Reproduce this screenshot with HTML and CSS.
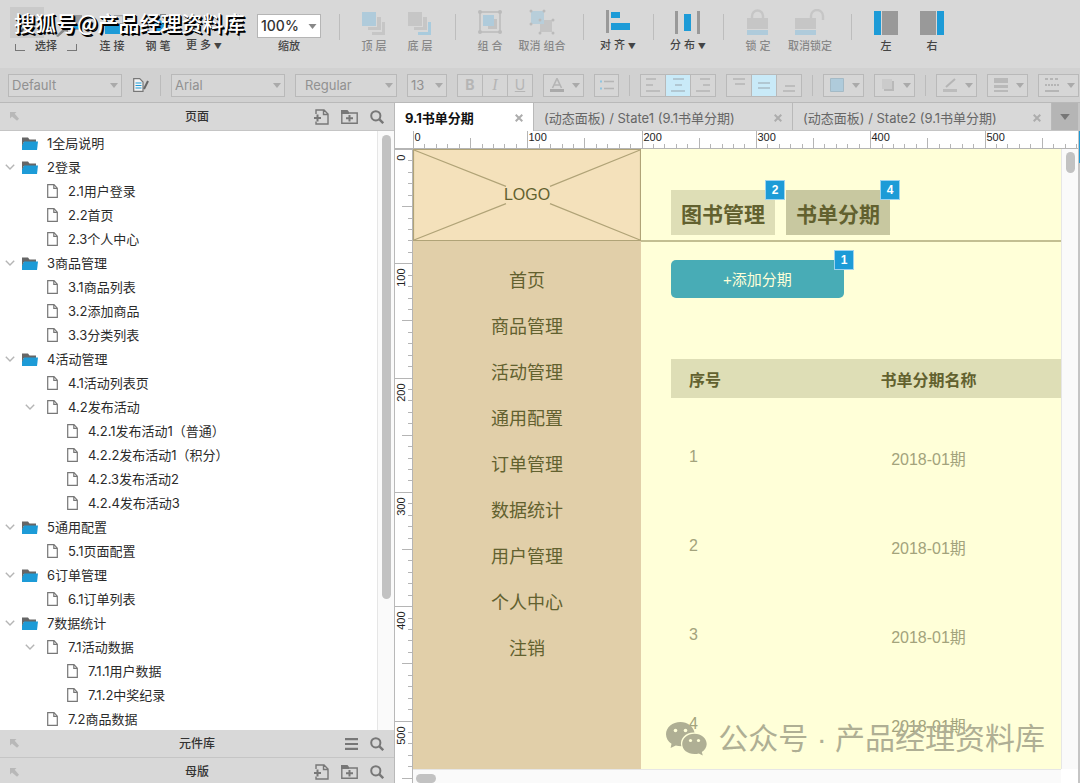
FILE: index.html
```html
<!DOCTYPE html>
<html lang="zh-CN">
<head>
<meta charset="utf-8">
<title>9.1书单分期</title>
<link rel="stylesheet" href="styles.css">
</head>
<body>
<svg class="defs" aria-hidden="true">
  <symbol id="i-folder" viewBox="0 0 16 13"><path d="M0 .5h6l1.500 2H14V5H0z" fill="#666"/><path d="M2 4.500h14L15 13H0V8z" fill="#1d9bd7"/><path d="M0 3h2.500L0 9z" fill="#666"/></symbol>
  <symbol id="i-page" viewBox="0 0 11 14"><path d="M.7.7h6.300l3.300 3.500v9.100H.7zM6.800.7v3.700h3.500" fill="none" stroke="#777" stroke-width="1.200"/></symbol>
  <symbol id="i-chev" viewBox="0 0 10 6"><path d="M.8.8 5 5 9.200.8" fill="none" stroke="#b5b5b5" stroke-width="1.400"/></symbol>
  <symbol id="i-undock" viewBox="0 0 9 9"><path d="M0 0h6.500L4.700 1.800 9 6.800 7 8.800 2 4.400 0 6.500z" fill="#b8b8b8"/></symbol>
  <symbol id="i-addpage" viewBox="0 0 15 16"><path d="M2 5V1h8l4 4v10H2v-2.500M9.500 1v4.500H14" fill="none" stroke="#777" stroke-width="1.400"/><path d="M0 9h7M3.500 5.500v7" stroke="#777" stroke-width="2"/></symbol>
  <symbol id="i-addfolder" viewBox="0 0 17 14"><path d="M.8 13.200V3h15.400v10.200z" fill="none" stroke="#777" stroke-width="1.400"/><path d="M0 0h6.500L8 2v2H0z" fill="#777"/><path d="M5 8.300h7M8.500 5v6.600" stroke="#777" stroke-width="2"/></symbol>
  <symbol id="i-search" viewBox="0 0 14 14"><circle cx="5.800" cy="5.800" r="4.600" fill="none" stroke="#777" stroke-width="2"/><path d="m9.200 9.200 4 4" stroke="#777" stroke-width="2.400"/></symbol>
  <symbol id="i-menu" viewBox="0 0 13 12"><path d="M0 1.200h13M0 6h13M0 10.800h13" stroke="#777" stroke-width="2.200"/></symbol>
  <symbol id="i-x" viewBox="0 0 8 8"><path d="m.7.7 6.600 6.600M7.300.7.7 7.300" stroke="#adadad" stroke-width="2"/></symbol>
  <symbol id="i-down" viewBox="0 0 8 5"><path d="M0 0h8L4 5z" fill="currentColor"/></symbol>
</svg>

<header class="toolbar">
  <button class="tool wide select-tool"><span class="select-icons"><svg width="34" height="31"><path d="M9 27 25 9" stroke="#555" stroke-width="2"/></svg><svg width="32" height="31"><path d="M12 8h18v15H12z" fill="#999"/><path d="M16 18h13v4H16z" fill="#1d9bd7"/><path d="m4 29 8-8-5-1h9v8l-3-4-7 6z" fill="#888"/></svg></span><span class="brackets">选择</span></button>
  <button class="tool"><svg width="24" height="24"><path d="M14 4.700h9v8h-9z" fill="none" stroke="#999"/><path d="M5 13h15v10H5z" fill="#1d9bd7"/></svg><span>连 接</span></button>
  <button class="tool"><svg width="24" height="24"><path d="m7 20 4-13 9 6-6 7z" fill="#1d9bd7"/><path d="M14 4h5v5" fill="none" stroke="#888" stroke-width="2"/></svg><span>钢 笔</span></button>
  <button class="tool"><svg width="24" height="24"></svg><span>更 多 <small>▼</small></span></button>
  <i class="sep"></i>
  <label class="zoom"><span class="pick"><select><option>100%</option></select><svg width="9" height="5"><use href="#i-down"/></svg></span><span>缩放</span></label>
  <i class="sep"></i>
  <button class="tool" disabled><svg width="24" height="24"><path d="M15 6h4v13H6v-3h9z" fill="#c6c6c6"/><path d="M20 11h3v13H10v-3h10z" fill="#c6c6c6"/><path d="M0 1h14v14H0z" fill="#afcbdb"/></svg><span>顶 层</span></button>
  <button class="tool" disabled><svg width="24" height="24"><path d="M15 6h4v13H6v-3h9z" fill="#c6c6c6"/><path d="M20 11h3v13H10v-3h10z" fill="#a9cbdd"/><path d="M0 1h14v14H0z" fill="#c6c6c6"/></svg><span>底 层</span></button>
  <i class="sep"></i>
  <button class="tool" disabled><svg width="26" height="26"><path d="M3 3h20v20H3z" fill="none" stroke="#bbb" stroke-width="1.500"/><g fill="#bbb"><circle cx="3" cy="3" r="2"/><circle cx="23" cy="3" r="2"/><circle cx="3" cy="23" r="2"/><circle cx="23" cy="23" r="2"/><path d="M15 10h5v10h-9v-4h4z" fill="#c3c3c3"/></g><path d="M6 6h11v11H6z" fill="#afcbdb"/></svg><span>组 合</span></button>
  <button class="tool mid" disabled><svg width="26" height="26"><path d="M11 11h12v12H11z" fill="#c5c5c5"/><path d="M2 2h13v13H2z" fill="#b8ceda"/><g fill="#bbb"><circle cx="2" cy="2" r="1.500"/><circle cx="15" cy="2" r="1.500"/><circle cx="2" cy="15" r="1.500"/><circle cx="24" cy="11" r="1.500"/><circle cx="11" cy="24" r="1.500"/><circle cx="24" cy="24" r="1.500"/><circle cx="11" cy="11" r="1.500"/></g></svg><span>取消 组合</span></button>
  <i class="sep"></i>
  <button class="tool"><svg width="24" height="24"><path d="M0 0h3v23H0z" fill="#999"/><path d="M5 2h9v6H5zM5 13h19v7H5z" fill="#1d9bd7"/></svg><span>对 齐 <small>▼</small></span></button>
  <i class="sep"></i>
  <button class="tool"><svg width="26" height="24"><path d="M0 1h3v23H0zM22 1h3v23h-3z" fill="#999"/><path d="M9 4h7v17H9z" fill="#1d9bd7"/></svg><span>分 布 <small>▼</small></span></button>
  <i class="sep"></i>
  <button class="tool" disabled><svg width="22" height="26"><path d="M5 10V7a5.500 5.500 0 0 1 11 0v3" fill="none" stroke="#c6c6c6" stroke-width="2.400"/><path d="M0 9h21v11H0z" fill="#c6c6c6"/><path d="M0 21h21v5H0z" fill="#afcbdb"/></svg><span>锁 定</span></button>
  <button class="tool mid" disabled><svg width="30" height="26"><path d="M16 10V7a5.800 5.800 0 0 1 12 0v4" fill="none" stroke="#c6c6c6" stroke-width="2.400"/><path d="M0 9h21v11H0z" fill="#c6c6c6"/><path d="M0 21h21v5H0z" fill="#afcbdb"/></svg><span>取消锁定</span></button>
  <i class="sep"></i>
  <button class="tool"><svg width="24" height="24"><path d="M0 0h7v24H0z" fill="#1d9bd7"/><path d="M8 0h16v24H8z" fill="#999"/></svg><span>左</span></button>
  <button class="tool"><svg width="24" height="24"><path d="M17 0h7v24h-7z" fill="#1d9bd7"/><path d="M0 0h16v24H0z" fill="#999"/></svg><span>右</span></button>
  <p class="stamp">搜狐号@产品经理资料库</p>
</header>

<div class="format">
  <span class="pick box w114"><select aria-label="样式" disabled><option>Default</option></select><svg width="8" height="5"><use href="#i-down"/></svg></span>
  <button class="plain" aria-label="编辑样式"><svg width="18" height="14"><path d="M1.700.700h6l3.300 3.300v9.300H1.700z" fill="#f4f4f4" stroke="#777" stroke-width="1.200"/><path d="M3.500 5h6M3.500 7.500h6M3.500 10h6" stroke="#1d9bd7"/><path d="m16 3-4 8" stroke="#666" stroke-width="2"/></svg></button>
  <i class="vsep"></i>
  <span class="pick box w114"><select aria-label="字体" disabled><option>Arial</option></select><svg width="8" height="5"><use href="#i-down"/></svg></span>
  <span class="pick box w102"><select aria-label="字重" disabled><option>Regular</option></select><svg width="8" height="5"><use href="#i-down"/></svg></span>
  <span class="pick box w40"><select aria-label="字号" disabled><option>13</option></select><svg width="8" height="5"><use href="#i-down"/></svg></span>
  <span class="group"><button class="b" disabled>B</button><button class="it" disabled>I</button><button class="u" disabled>U</button></span>
  <button class="box drop" aria-label="文字颜色" disabled><svg width="14" height="14"><path d="m2.500 10 4.500-9.500L11.500 10M4 7h6" fill="none" stroke="#b5b5b5" stroke-width="1.600"/><path d="M0 11h14v3H0z" fill="#aaa"/></svg><svg width="8" height="5"><use href="#i-down"/></svg></button>
  <button class="box w25" aria-label="项目符号" disabled><svg width="14" height="10"><path d="M0 1.500h2M0 8.500h2" stroke="#8fc4df" stroke-width="2"/><path d="M4 1.500h10M4 8.500h10" stroke="#b5b5b5" stroke-width="1.500"/></svg></button>
  <i class="vsep"></i>
  <span class="group"><button aria-label="左对齐" disabled><svg width="14" height="14"><path d="M0 1h10M0 7h7M0 13h14" stroke="#b5b5b5" stroke-width="1.600"/></svg></button><button class="on" aria-label="居中" disabled><svg width="14" height="14"><path d="M2 1h11M4 7h7M0 13h14" stroke="#a9bcc5" stroke-width="1.600"/></svg></button><button aria-label="右对齐" disabled><svg width="14" height="14"><path d="M4 1h10M7 7h7M0 13h14" stroke="#b5b5b5" stroke-width="1.600"/></svg></button></span>
  <span class="group"><button aria-label="顶部" disabled><svg width="12" height="14"><path d="M0 1h12M2 6h10" stroke="#b5b5b5" stroke-width="1.600"/></svg></button><button class="on" aria-label="中部" disabled><svg width="12" height="14"><path d="M0 5h12M0 10h12" stroke="#a9bcc5" stroke-width="1.600"/></svg></button><button aria-label="底部" disabled><svg width="12" height="14"><path d="M2 8h10M0 13h12" stroke="#b5b5b5" stroke-width="1.600"/></svg></button></span>
  <i class="vsep"></i>
  <button class="box drop" aria-label="填充" disabled><svg width="14" height="14"><path d="M.5.500h13v13H.5z" fill="#afcbdb" stroke="#a4bac6"/></svg><svg width="8" height="5"><use href="#i-down"/></svg></button>
  <button class="box drop" aria-label="阴影" disabled><svg width="14" height="14"><path d="M3 3h10v10H3z" fill="#b9b9b9"/><path d="M1 1h10v10H1z" fill="#cbcbcb"/></svg><svg width="8" height="5"><use href="#i-down"/></svg></button>
  <i class="vsep"></i>
  <button class="box drop" aria-label="线条颜色" disabled><svg width="14" height="14"><path d="m3 9 9-8" stroke="#b5b5b5" stroke-width="2"/><path d="M0 11h14v3H0z" fill="#bcbcbc"/></svg><svg width="8" height="5"><use href="#i-down"/></svg></button>
  <button class="box drop" aria-label="线宽" disabled><svg width="14" height="14"><path d="M0 0h14v5H0zM0 7h14v3H0zM0 12h14v2H0z" fill="#b9b9b9"/></svg><svg width="8" height="5"><use href="#i-down"/></svg></button>
  <button class="box drop" aria-label="线型" disabled><svg width="14" height="14"><path d="M0 1h14" stroke="#b5b5b5" stroke-width="2" stroke-dasharray="3 2"/><path d="M0 7h14" stroke="#b5b5b5" stroke-width="2" stroke-dasharray="2 1"/><path d="M0 13h14" stroke="#b5b5b5" stroke-width="2"/></svg><svg width="8" height="5"><use href="#i-down"/></svg></button>
</div>

<main class="work">
  <aside class="side">
    <div class="phead"><svg width="9" height="9"><use href="#i-undock"/></svg><h2>页面</h2><span class="acts"><button class="plain" aria-label="添加页面"><svg width="15" height="16"><use href="#i-addpage"/></svg></button><button class="plain" aria-label="添加文件夹"><svg width="17" height="14"><use href="#i-addfolder"/></svg></button><button class="plain" aria-label="搜索"><svg width="14" height="14"><use href="#i-search"/></svg></button></span></div>
    <div class="treewrap">
      <ul class="tree" id="tree"></ul>
      <div class="vbar"><i class="thumb"></i></div>
    </div>
    <div class="phead"><svg width="9" height="9"><use href="#i-undock"/></svg><h2>元件库</h2><span class="acts"><button class="plain" aria-label="菜单"><svg width="13" height="12"><use href="#i-menu"/></svg></button><button class="plain" aria-label="搜索"><svg width="14" height="14"><use href="#i-search"/></svg></button></span></div>
    <div class="phead last"><svg width="9" height="9"><use href="#i-undock"/></svg><h2>母版</h2><span class="acts"><button class="plain" aria-label="添加母版"><svg width="15" height="16"><use href="#i-addpage"/></svg></button><button class="plain" aria-label="添加文件夹"><svg width="17" height="14"><use href="#i-addfolder"/></svg></button><button class="plain" aria-label="搜索"><svg width="14" height="14"><use href="#i-search"/></svg></button></span></div>
  </aside>

  <section class="editor">
    <nav class="tabs">
      <div class="tab active"><span>9.1书单分期</span><button class="plain" aria-label="关闭"><svg width="8" height="8"><use href="#i-x"/></svg></button></div>
      <div class="tab"><span>(动态面板) / State1 (9.1书单分期)</span><button class="plain" aria-label="关闭"><svg width="8" height="8"><use href="#i-x"/></svg></button></div>
      <div class="tab"><span>(动态面板) / State2 (9.1书单分期)</span><button class="plain" aria-label="关闭"><svg width="8" height="8"><use href="#i-x"/></svg></button></div>
      <button class="more" aria-label="更多标签"><svg width="10" height="6" viewBox="0 0 8 5"><path d="M0 0h8L4 5z" fill="#777"/></svg></button>
    </nav>
    <div class="stage">
      <svg class="hruler" id="hruler"></svg>
      <svg class="vruler" id="vruler"></svg>
      <div class="canvas">
        <div class="menu">
          <div class="logo"><svg viewBox="0 0 228 91" preserveAspectRatio="none"><path d="M.5.500h227v90H.5zM1 1l92 36M227 1l-90 36M1 90l92-36M227 90l-90-36" fill="none" stroke="#b0a377" stroke-width="1.200"/></svg><span>LOGO</span></div>
          <ul>
            <li>首页</li><li>商品管理</li><li>活动管理</li><li>通用配置</li><li>订单管理</li><li>数据统计</li><li>用户管理</li><li>个人中心</li><li>注销</li>
          </ul>
        </div>
        <div class="content">
          <div class="heads"><div class="htab">图书管理<b class="badge">2</b></div><div class="htab cur">书单分期<b class="badge">4</b></div></div>
          <div class="body">
            <button class="add">+添加分期<b class="badge">1</b></button>
            <table>
              <thead><tr><th class="no">序号</th><th>书单分期名称</th></tr></thead>
              <tbody>
                <tr><td class="no">1</td><td>2018-01期</td></tr>
                <tr><td class="no">2</td><td>2018-01期</td></tr>
                <tr><td class="no">3</td><td>2018-01期</td></tr>
                <tr><td class="no">4</td><td>2018-01期</td></tr>
              </tbody>
            </table>
          </div>
        </div>
        <div class="mark"><svg width="41" height="34" viewBox="0 0 41 34"><path d="M14.500 0C6.500 0 0 5.400 0 12.300c0 4 2.200 7.300 5.500 9.500L4.600 26l5.200-2.500c1.800.5 3.500.7 5.500.7-2-8 5-14.200 13.200-13.700C27.200 4.500 21.500 0 14.500 0z" fill="#afaf94"/><path d="M28.500 11.800c-7 0-12.300 4.500-12.300 10.200S21.500 32 28.500 32c1.500 0 3-.2 4.300-.6l4 2.200-1-3.600c3-1.900 4.900-4.700 4.900-8 0-5.700-5.500-10.200-12.200-10.200z" fill="#afaf94"/><g fill="#ffffd8"><circle cx="9.500" cy="8.500" r="1.800"/><circle cx="19.500" cy="8.500" r="1.800"/><circle cx="24.500" cy="18.500" r="1.600"/><circle cx="32.500" cy="18.500" r="1.600"/></g></svg><span>公众号 · 产品经理资料库</span></div>
      </div>
      <div class="cbar"><i class="thumb"></i></div>
      <div class="hbar"><i class="thumb"></i></div>
    </div>
  </section>
  <div class="edge"><i></i></div>
</main>
<script src="app.js"></script>
</body>
</html>
```

FILE: styles.css
```css
* { box-sizing: border-box; }
body { margin: 0; height: 100vh; display: flex; flex-direction: column; overflow: hidden; background: #d8d8d8; color: #333; font: 12px/16px Inter, "Noto Sans CJK SC", sans-serif; }
button, select { font: inherit; color: inherit; margin: 0; padding: 0; border: 0; background: none; }
h2, p, ul { margin: 0; padding: 0; list-style: none; }
svg { display: block; flex: none; }
.defs { position: absolute; width: 0; height: 0; }
.plain { display: flex; align-items: center; justify-content: center; }

.toolbar { flex: none; position: relative; display: flex; height: 68px; padding: 0 10px; }
.tool { flex: none; width: 46px; height: 54px; display: flex; flex-direction: column; align-items: center; justify-content: flex-end; gap: 2px; font-size: 11px; font-weight: 500; color: #444; white-space: nowrap; }
.tool small { font-size: 8px; }
.tool > svg { margin-bottom: 1px; }
.tool:disabled { color: #888; }
.tool.mid { width: 58px; }
.tool.wide { width: 79px; align-items: flex-start; }
.tool.wide .brackets { width: 62px; margin-left: 5px; text-align: center; background: linear-gradient(#777, #777) 0 12px / 10px 1px no-repeat, linear-gradient(#777, #777) 0 6px / 1px 7px no-repeat, linear-gradient(#777, #777) 100% 12px / 10px 1px no-repeat, linear-gradient(#777, #777) 100% 6px / 1px 7px no-repeat; }
.select-icons { display: flex; gap: 8px; margin-bottom: -2px; }
.select-icons svg:first-child { background: #cacaca; }
.sep { flex: none; width: 1px; height: 26px; margin: 14px 11px 0 12px; background: #bdbdbd; }
.zoom { width: 76px; padding: 14px 6px 0; display: flex; flex-direction: column; align-items: center; font-size: 11px; font-weight: 500; color: #444; }
.zoom .pick { width: 64px; height: 24px; border: 1px solid #b5b5b5; background: #fff; font-size: 14px; }
.zoom select { color: #333; padding-left: 3px; }
.zoom .pick svg { color: #888; }
.pick { position: relative; display: flex; align-items: center; }
.pick select { appearance: none; width: 100%; height: 100%; opacity: 1; }
.pick svg { position: absolute; right: 3px; color: #aaa; pointer-events: none; }
.stamp { position: absolute; left: 14px; top: 6px; font: 500 21px/32px "Noto Sans CJK SC", sans-serif; color: #fff; text-shadow: 2px 2px 0 #000, 1px 1px 0 #000; white-space: nowrap; }

.format { flex: none; display: flex; align-items: center; height: 35px; padding: 0 8px; gap: 10px; background: #d1d1d1; border-bottom: 1px solid #b9b9b9; color: #aaa; }
.format > * { flex: none; }
.box, .group { height: 23px; border: 1px solid #b9b9b9; background: #d6d6d6; }
.box select { padding-left: 3px; color: #919191; font-size: 13px; }
.w114 { width: 114px; }
.w102 { width: 102px; }
.w102 select { padding-left: 9px; }
.w40 { width: 40px; }
.w25 { width: 25px; display: flex; align-items: center; justify-content: center; }
.vsep { width: 1px; height: 21px; background: #bbb; }
.drop { width: 41px; display: flex; align-items: center; justify-content: space-between; padding: 0 3px 0 6px; }
.group { display: flex; width: 76px; }
.group button { flex: 1; display: flex; align-items: center; justify-content: center; color: #b5b5b5; font-size: 14px; }
.group button + button { border-left: 1px solid #b9b9b9; }
.group .on { background: #c9eaf8; }
.group .b { font-weight: 700; }
.group .it { font-style: italic; font-family: "Liberation Serif", serif; font-size: 16px; }
.group .u { text-decoration: underline; }

.work { flex: 1; min-height: 0; display: flex; }
.side { flex: none; width: 395px; display: flex; flex-direction: column; border-right: 1px solid #b9b9b9; }
.phead { flex: none; height: 28px; display: grid; grid-template-columns: 1fr auto 1fr; align-items: center; padding: 0 10px; border-bottom: 1px solid #c5c5c5; }
.phead h2 { font-size: 12px; font-weight: 500; }
.phead.last { height: 25px; border: 0; padding-top: 3px; }
.acts { display: flex; justify-content: flex-end; align-items: center; gap: 12px; }
.treewrap { flex: 1; min-height: 0; display: flex; background: #fff; }
.tree { flex: 1; overflow: hidden; font-size: 13px; }
.tree li { height: 24px; display: flex; align-items: center; white-space: nowrap; color: #2b2b2b; }
.tree .tw { width: 10px; margin: 0 7px 0 5px; flex: none; }
.tree .ic { width: 25px; flex: none; }
.tree .page .ic { width: 21px; }
.tree .l2 { padding-left: 20px; }
.tree .l2 .tw { margin-right: 12px; }
.tree .l3 { padding-left: 41px; }
.tree .l3 .tw { margin-right: 11px; }
.vbar { flex: none; width: 17px; padding: 4px 3px 0 4px; background: #fafafa; border-left: 1px solid #e6e6e6; }
.thumb { display: block; border-radius: 5px; background: #c2c2c2; }
.vbar .thumb { height: 78%; }

.editor { flex: 1; min-width: 0; display: flex; flex-direction: column; background: #fff; }
.tabs { flex: none; height: 28px; display: flex; background: #d8d8d8; border-bottom: 1px solid #c5c5c5; }
.tab { flex: 1 1 260px; min-width: 0; display: flex; align-items: center; justify-content: space-between; padding: 2px 10px 0; color: #666; font-size: 13px; white-space: nowrap; border-right: 1px solid #b9b9b9; }
.tab.active { flex: none; width: 139px; height: 28px; background: #fff; color: #111; font-weight: 700; }
.more { width: 26px; flex: none; display: flex; align-items: center; justify-content: center; background: #b5b5b5; }
.stage { flex: 1; min-height: 0; display: grid; grid-template: 18px minmax(0, 1fr) 14px / 18px minmax(0, 1fr) 17px; }
.hruler { grid-area: 1 / 1 / 2 / 4; width: 100%; height: 18px; border-bottom: 1px solid #b5b5b5; }
.vruler { grid-area: 2 / 1 / 4 / 2; width: 18px; height: 100%; border-right: 1px solid #b5b5b5; }
.hruler text, .vruler text { font: 11px "Liberation Sans", Arial, sans-serif; fill: #222; }
.canvas { grid-area: 2 / 2; position: relative; display: flex; overflow: hidden; background: #ffffd8; color: #62612f; font-family: "Liberation Sans", "Noto Sans CJK SC", sans-serif; }
.menu { flex: none; width: 228px; background: #e1cfa9; }
.menu .logo { height: 92px; display: grid; place-items: center; background: #f4e1bb; font-size: 16px; }
.logo > * { grid-area: 1 / 1; }
.logo svg { width: 100%; height: 100%; }
.menu ul { padding-top: 17px; }
.menu li { height: 46px; line-height: 46px; text-align: center; font-size: 18px; }
.content { flex: 1; min-width: 0; }
.heads { height: 93px; display: flex; gap: 11px; padding: 41px 0 0 30px; border-bottom: 2px solid #c3bf92; }
.htab { position: relative; height: 45px; padding: 0 10px; line-height: 49px; font-size: 21px; font-weight: 700; background: #dedeb6; }
.htab.cur { background: #c8c8a0; }
.badge { position: absolute; top: -10px; right: -10px; width: 20px; height: 20px; border: 1px solid #9ed3ee; background: #1d9bd7; color: #fff; font: 700 12px/18px "Liberation Sans", sans-serif; text-align: center; }
.body { padding: 18px 0 0 30px; }
.add { position: relative; display: block; width: 173px; height: 38px; padding-top: 2px; border-radius: 5px; background: #48acb6; color: #ffffd8; font-size: 15px; }
table { width: 100%; margin-top: 61px; border-collapse: collapse; table-layout: fixed; font-size: 16px; }
th { height: 39px; padding: 4px 0 0; background: #dedeb6; font-weight: 700; line-height: 20px; }
td { height: 89px; padding: 0 0 17px; text-align: center; color: #a3a37c; vertical-align: bottom; line-height: 20px; }
th.no, td.no { width: 125px; padding-left: 18px; text-align: left; }
td.no { padding-bottom: 20px; }
.mark { position: absolute; right: 16px; bottom: 10px; display: flex; align-items: center; gap: 11px; color: #afaf94; font: 400 30px/40px "Liberation Sans", "Noto Sans CJK SC", sans-serif; white-space: nowrap; }
.cbar { grid-area: 2 / 3; padding: 3px 3px 0 4px; background: #fafafa; border-left: 1px solid #e6e6e6; }
.cbar .thumb { height: 21px; width: 9px; }
.hbar { grid-area: 3 / 2; padding: 4px 3px 0; background: #fafafa; border-top: 1px solid #e6e6e6; }
.hbar .thumb { width: 20px; height: 9px; }
.edge { flex: none; width: 2px; padding: 28px 0 0 1px; background: #c5c5c5; }
.edge i { display: block; height: 32px; background: #1d9bd7; }
```

FILE: app.js
```js
// Page tree: [level, kind, has children, title]
const pages = [
  [1, 'folder', 0, '1全局说明'], [1, 'folder', 1, '2登录'],
  [2, 'page', 0, '2.1用户登录'], [2, 'page', 0, '2.2首页'], [2, 'page', 0, '2.3个人中心'],
  [1, 'folder', 1, '3商品管理'],
  [2, 'page', 0, '3.1商品列表'], [2, 'page', 0, '3.2添加商品'], [2, 'page', 0, '3.3分类列表'],
  [1, 'folder', 1, '4活动管理'],
  [2, 'page', 0, '4.1活动列表页'], [2, 'page', 1, '4.2发布活动'],
  [3, 'page', 0, '4.2.1发布活动1（普通）'], [3, 'page', 0, '4.2.2发布活动1（积分）'],
  [3, 'page', 0, '4.2.3发布活动2'], [3, 'page', 0, '4.2.4发布活动3'],
  [1, 'folder', 1, '5通用配置'], [2, 'page', 0, '5.1页面配置'],
  [1, 'folder', 1, '6订单管理'], [2, 'page', 0, '6.1订单列表'],
  [1, 'folder', 1, '7数据统计'], [2, 'page', 1, '7.1活动数据'],
  [3, 'page', 0, '7.1.1用户数据'], [3, 'page', 0, '7.1.2中奖纪录'],
  [2, 'page', 0, '7.2商品数据']
];
document.getElementById('tree').innerHTML = pages.map(([level, kind, open, title]) =>
  `<li class="l${level} ${kind}"><span class="tw">${open ? '<svg width="10" height="6"><use href="#i-chev"/></svg>' : ''}</span>` +
  `<span class="ic"><svg width="${kind === 'folder' ? 16 : 11}" height="${kind === 'folder' ? 13 : 14}"><use href="#i-${kind}"/></svg></span><span>${title}</span></li>`
).join('');

const step = 11.43;
const tickLength = i => (i % 10 === 0 ? 17 : i % 5 === 0 ? 10 : 4);
function drawRulers() {
  const hr = document.getElementById('hruler');
  const vr = document.getElementById('vruler');
  const width = hr.getBoundingClientRect().width;
  const height = vr.getBoundingClientRect().height;
  let h = '', v = '';
  for (let i = 0; 18 + i * step < width; i++) {
    const x = Math.round(18 + i * step) + 0.5;
    h += `<path d="M${x} 17v-${tickLength(i)}" stroke="#b5b5b5"/>`;
    if (i % 10 === 0) h += `<text x="${x + 1}" y="10">${i * 10}</text>`;
  }
  for (let i = 0; i * step < height; i++) {
    const y = Math.round(i * step) + 0.5;
    v += `<path d="M17 ${y}h-${tickLength(i)}" stroke="#b5b5b5"/>`;
    if (i % 10 === 0) v += `<text transform="translate(10 ${y + 5}) rotate(-90)" text-anchor="end">${i * 10}</text>`;
  }
  hr.innerHTML = h;
  vr.innerHTML = v;
}
drawRulers();
addEventListener('resize', drawRulers);
```
